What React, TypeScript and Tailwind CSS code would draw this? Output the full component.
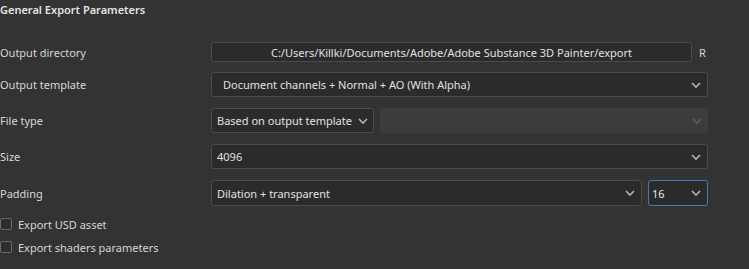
import React from "react";

const Chevron = ({ dim = false }: { dim?: boolean }) => (
  <svg width="10" height="6" viewBox="0 0 10 6" className="shrink-0">
    <path d="M1 1 L5 5 L9 1" fill="none" stroke={dim ? "#5f5f5f" : "#b4b4b4"} strokeWidth="1.6" />
  </svg>
);

const Label = ({ children }: { children: React.ReactNode }) => (
  <div className="w-[211px] shrink-0 pt-[2px] text-[11px] text-[#d6d6d6]">{children}</div>
);

export default function App() {
  return (
    <div
      className="w-[749px] h-[269px] bg-[#333333] text-[#dcdcdc] overflow-hidden"
      style={{ fontFamily: '"Noto Sans", "Open Sans", sans-serif' }}
    >
      <div className="h-[18px] pt-[2px] flex items-center text-[11px] font-semibold text-[#e4e4e4]">
        General Export Parameters
      </div>

      <div className="mt-[24px] flex items-center h-[20px]">
        <Label>Output directory</Label>
        <div className="w-[481px] h-[20px] pt-[2px] rounded-[3px] border border-[#4b4b4b] bg-[#2b2b2b] flex items-center justify-center text-[11px] text-[#e0e0e0]">
          C:/Users/Killki/Documents/Adobe/Adobe Substance 3D Painter/export
        </div>
        <div className="ml-[7px] pt-[2px] text-[11px] text-[#d6d6d6]">R</div>
      </div>

      <div className="mt-[10px] flex items-center h-[25px]">
        <Label>Output template</Label>
        <div className="w-[497px] h-[25px] rounded-[3px] border border-[#4b4b4b] bg-[#2b2b2b] flex items-center pl-[11px] pr-[6px] text-[11px] text-[#e0e0e0]">
          <span className="flex-1 pt-[2px]">Document channels + Normal + AO (With Alpha)</span>
          <Chevron />
        </div>
      </div>

      <div className="mt-[11px] flex items-center h-[25px]">
        <Label>File type</Label>
        <div className="w-[163px] h-[25px] rounded-[3px] border border-[#4b4b4b] bg-[#2b2b2b] flex items-center pl-[5px] pr-[5px] text-[11px] text-[#e0e0e0]">
          <span className="flex-1 pt-[2px] whitespace-nowrap">Based on output template</span>
          <Chevron />
        </div>
        <div className="ml-[6px] w-[328px] h-[25px] rounded-[3px] bg-[#3c3c3c] flex items-center justify-end pr-[6px]">
          <Chevron dim />
        </div>
      </div>

      <div className="mt-[11px] flex items-center h-[25px]">
        <Label>Size</Label>
        <div className="w-[497px] h-[25px] rounded-[3px] border border-[#4b4b4b] bg-[#2b2b2b] flex items-center pl-[5px] pr-[6px] text-[11px] text-[#e0e0e0]">
          <span className="flex-1 pt-[2px]">4096</span>
          <Chevron />
        </div>
      </div>

      <div className="mt-[11px] flex items-center h-[26px]">
        <Label>Padding</Label>
        <div className="w-[431px] h-[26px] rounded-[3px] border border-[#4b4b4b] bg-[#2b2b2b] flex items-center pl-[5px] pr-[6px] text-[11px] text-[#e0e0e0]">
          <span className="flex-1 pt-[2px]">Dilation + transparent</span>
          <Chevron />
        </div>
        <div className="ml-[6px] w-[60px] h-[26px] rounded-[3px] border border-[#4a78b5] bg-[#2b2b2b] flex items-center pl-[3px] pr-[6px] text-[11px] text-[#e8e8e8]">
          <span className="flex-1 pt-[2px]">16</span>
          <Chevron />
        </div>
      </div>

      <div className="mt-[12px] flex items-center h-[12px] gap-[6px]">
        <div className="w-[12px] h-[12px] rounded-[2px] border border-[#6a6a6a] bg-[#2e2e2e]" />
        <span className="pt-[2px] text-[11px] text-[#d6d6d6]">Export USD asset</span>
      </div>

      <div className="mt-[11px] flex items-center h-[12px] gap-[6px]">
        <div className="w-[12px] h-[12px] rounded-[2px] border border-[#6a6a6a] bg-[#2e2e2e]" />
        <span className="pt-[2px] text-[11px] text-[#d6d6d6]">Export shaders parameters</span>
      </div>
    </div>
  );
}
